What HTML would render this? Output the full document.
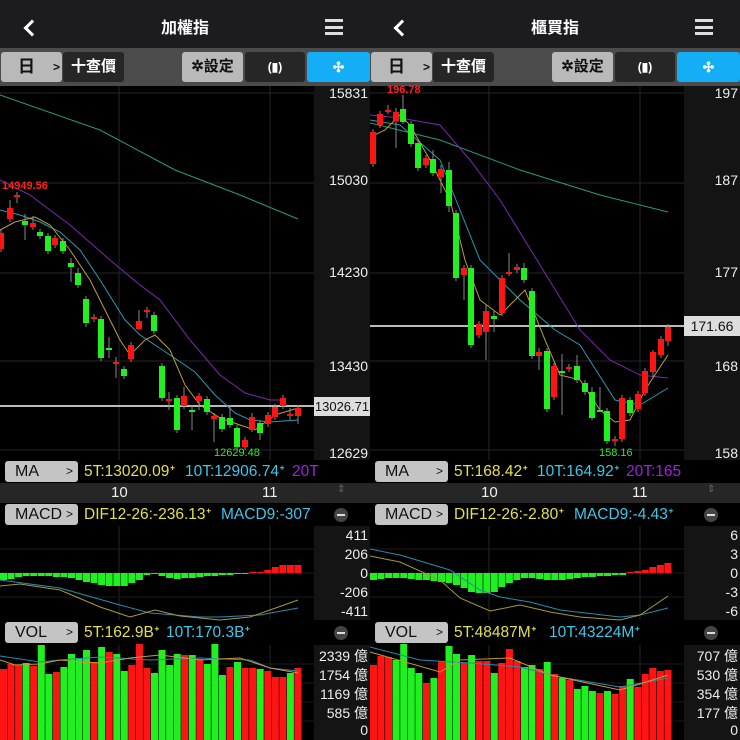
<!DOCTYPE html>
<html><head><meta charset="utf-8">
<style>
*{margin:0;padding:0;box-sizing:border-box}
body{width:740px;height:740px;background:#000;overflow:hidden;font-family:"Liberation Sans","Noto Sans CJK TC",sans-serif;position:relative}
.p{position:absolute;top:0;width:370px;height:740px;overflow:hidden}
.hdr{position:absolute;left:0;top:0;width:370px;height:48px;background:#1c1c1e;color:#fff;font-size:16px;font-weight:bold;text-align:center;line-height:58px}
.tb{position:absolute;left:0;top:48px;width:370px;height:38px;background:#4b4b4b}
.b{position:absolute;top:4px;height:30px;border-radius:3px;font-size:15px;font-weight:bold;text-align:center;line-height:30px}
.lg{background:#b9b9b9;color:#111}.dk{background:#262626;color:#fff}.bl{background:#13aef6;color:#fff}
.row{position:absolute;left:0;width:370px;height:23px;background:#000}
.btn{position:absolute;left:5px;top:1px;width:73px;height:21px;background:#c4c4c4;border-radius:3px;font-size:16px;color:#111;line-height:21px;padding-left:10px}
.btn span{position:absolute;right:5px;font-size:12px}
.t{position:absolute;top:1px;font-size:15.5px;white-space:nowrap;line-height:21px}
.ax{position:absolute;left:314px;width:56px;background:#141414}
.al{position:absolute;right:2px;font-size:14px;color:#eee;text-align:right;white-space:nowrap}
svg{position:absolute;left:0;top:0}
</style></head><body>

<div class="p" id="L" style="left:0">
 <div class="ax" style="top:86px;height:374px"></div>
 <div class="ax" style="top:526px;height:94px"></div>
 <div class="ax" style="top:645px;height:95px"></div>
 <svg id="sL" width="370" height="740"></svg>
 <div class="hdr">加權指</div>
 <div style="position:absolute;left:26px;top:22px;width:12px;height:12px;border-left:3px solid #fff;border-bottom:3px solid #fff;transform:rotate(45deg)"></div>
 <div style="position:absolute;left:325px;top:19px;width:18px;height:16px;border-top:3px solid #ddd;border-bottom:3px solid #ddd"><div style="margin-top:3.5px;height:3px;background:#ddd"></div></div>
 <div class="tb">
  <div class="b lg" style="left:1px;width:61px"><span style="position:absolute;left:17px;font-size:17px">日</span><span style="position:absolute;left:52px;font-size:12px">&gt;</span></div>
  <div class="b dk" style="left:63px;width:61px">十查價</div>
  <div class="b lg" style="left:182px;width:61px">✲設定</div>
  <div class="b dk" style="left:245px;width:60px;font-size:12px">(▮)</div>
  <div class="b bl" style="left:307px;width:63px;font-size:14px">✣</div>
 </div>
 <div class="al" style="top:85px">15831</div>
 <div class="al" style="top:172px">15030</div>
 <div class="al" style="top:264px">14230</div>
 <div class="al" style="top:358px">13430</div>
 <div class="al" style="top:445px">12629</div>
 <div style="position:absolute;left:314px;top:397px;width:56px;height:19px;background:#ddd;color:#111;font-size:13px;line-height:19px;text-align:center">13026.71</div>
 <div style="position:absolute;left:2px;top:180px;color:#ff2020;font-size:11px;font-weight:bold">14949.56</div>
 <div style="position:absolute;left:214px;top:447px;color:#2ee82e;font-size:11px">12629.48</div>
 <div class="row" style="top:460px"><div class="btn">MA<span>&gt;</span></div><div class="t" style="left:84px;color:#e4e04a">5T:13020.09ᐩ</div><div class="t" style="left:185px;color:#3cc8e8">10T:12906.74ᐩ</div><div class="t" style="left:292px;color:#a020e0">20T</div></div>
 <div style="position:absolute;left:0;top:483px;width:370px;height:20px;background:#262626;color:#eee;font-size:15px"><span style="position:absolute;left:111px;top:1px">10</span><span style="position:absolute;left:262px;top:1px">11</span><span style="position:absolute;left:337px;top:1px;color:#666;font-size:10px">⇕</span></div>
 <div class="row" style="top:503px"><div class="btn">MACD<span>&gt;</span></div><div class="t" style="left:84px;color:#e4e04a">DIF12-26:-236.13ᐩ</div><div class="t" style="left:221px;color:#3cc8e8">MACD9:-307</div><div style="position:absolute;left:334px;top:5px;width:14px;height:14px;border-radius:7px;background:#444"><div style="margin:6px 3px;height:2px;background:#ddd"></div></div></div>
 <div class="al" style="top:527px">411</div><div class="al" style="top:546px">206</div><div class="al" style="top:565px">0</div><div class="al" style="top:584px">-206</div><div class="al" style="top:603px">-411</div>
 <div class="row" style="top:621px"><div class="btn">VOL<span>&gt;</span></div><div class="t" style="left:84px;color:#e4e04a">5T:162.9Bᐩ</div><div class="t" style="left:166px;color:#3cc8e8">10T:170.3Bᐩ</div><div style="position:absolute;left:334px;top:5px;width:14px;height:14px;border-radius:7px;background:#444"><div style="margin:6px 3px;height:2px;background:#ddd"></div></div></div>
 <div class="al" style="top:646px">2339 億</div><div class="al" style="top:665px">1754 億</div><div class="al" style="top:684px">1169 億</div><div class="al" style="top:703px">585 億</div><div class="al" style="top:722px">0</div>
</div>

<div class="p" id="R" style="left:370px">
 <div class="ax" style="top:86px;height:374px"></div>
 <div class="ax" style="top:526px;height:94px"></div>
 <div class="ax" style="top:645px;height:95px"></div>
 <svg id="sR" width="370" height="740"></svg>
 <div class="hdr">櫃買指</div>
 <div style="position:absolute;left:26px;top:22px;width:12px;height:12px;border-left:3px solid #fff;border-bottom:3px solid #fff;transform:rotate(45deg)"></div>
 <div style="position:absolute;left:325px;top:19px;width:18px;height:16px;border-top:3px solid #ddd;border-bottom:3px solid #ddd"><div style="margin-top:3.5px;height:3px;background:#ddd"></div></div>
 <div class="tb">
  <div class="b lg" style="left:1px;width:61px"><span style="position:absolute;left:17px;font-size:17px">日</span><span style="position:absolute;left:52px;font-size:12px">&gt;</span></div>
  <div class="b dk" style="left:63px;width:61px">十查價</div>
  <div class="b lg" style="left:182px;width:61px">✲設定</div>
  <div class="b dk" style="left:245px;width:60px;font-size:12px">(▮)</div>
  <div class="b bl" style="left:307px;width:63px;font-size:14px">✣</div>
 </div>
 <div class="al" style="top:85px">197</div>
 <div class="al" style="top:172px">187</div>
 <div class="al" style="top:264px">177</div>
 <div class="al" style="top:358px">168</div>
 <div class="al" style="top:445px">158</div>
 <div style="position:absolute;left:314px;top:316px;width:56px;height:20px;background:#ddd;color:#111;font-size:14px;line-height:20px;text-align:center">171.66</div>
 <div style="position:absolute;left:17px;top:84px;color:#ff2020;font-size:11px;font-weight:bold">196.78</div>
 <div style="position:absolute;left:229px;top:447px;color:#2ee82e;font-size:11px">158.16</div>
 <div class="row" style="top:460px"><div class="btn">MA<span>&gt;</span></div><div class="t" style="left:84px;color:#e4e04a">5T:168.42ᐩ</div><div class="t" style="left:167px;color:#3cc8e8">10T:164.92ᐩ</div><div class="t" style="left:256px;color:#a020e0">20T:165</div></div>
 <div style="position:absolute;left:0;top:483px;width:370px;height:20px;background:#262626;color:#eee;font-size:15px"><span style="position:absolute;left:111px;top:1px">10</span><span style="position:absolute;left:262px;top:1px">11</span><span style="position:absolute;left:337px;top:1px;color:#666;font-size:10px">⇕</span></div>
 <div class="row" style="top:503px"><div class="btn">MACD<span>&gt;</span></div><div class="t" style="left:84px;color:#e4e04a">DIF12-26:-2.80ᐩ</div><div class="t" style="left:204px;color:#3cc8e8">MACD9:-4.43ᐩ</div><div style="position:absolute;left:334px;top:5px;width:14px;height:14px;border-radius:7px;background:#444"><div style="margin:6px 3px;height:2px;background:#ddd"></div></div></div>
 <div class="al" style="top:527px">6</div><div class="al" style="top:546px">3</div><div class="al" style="top:565px">0</div><div class="al" style="top:584px">-3</div><div class="al" style="top:603px">-6</div>
 <div class="row" style="top:621px"><div class="btn">VOL<span>&gt;</span></div><div class="t" style="left:84px;color:#e4e04a">5T:48487Mᐩ</div><div class="t" style="left:179px;color:#3cc8e8">10T:43224Mᐩ</div><div style="position:absolute;left:334px;top:5px;width:14px;height:14px;border-radius:7px;background:#444"><div style="margin:6px 3px;height:2px;background:#ddd"></div></div></div>
 <div class="al" style="top:646px">707 億</div><div class="al" style="top:665px">530 億</div><div class="al" style="top:684px">354 億</div><div class="al" style="top:703px">177 億</div><div class="al" style="top:722px">0</div>
</div>

<script>
var R='#ff1414',G='#20f020';
function draw(id,o){
 var s='';
 [93,183,273,361,450].forEach(function(y){s+='<line x1="0" x2="314" y1="'+y+'" y2="'+y+'" stroke="#262626"/>';});
 [119,270].forEach(function(x){s+='<line x1="'+x+'" x2="'+x+'" y1="86" y2="460" stroke="#262626"/><line x1="'+x+'" x2="'+x+'" y1="526" y2="620" stroke="#262626"/><line x1="'+x+'" x2="'+x+'" y1="645" y2="740" stroke="#262626"/>';});
 [549,573,597].forEach(function(y){s+='<line x1="0" x2="314" y1="'+y+'" y2="'+y+'" stroke="#1c1c1c"/>';});
 [664,683,702,721].forEach(function(y){s+='<line x1="0" x2="314" y1="'+y+'" y2="'+y+'" stroke="#1c1c1c"/>';});
 s+='<line x1="0" x2="314" y1="'+o.pl+'" y2="'+o.pl+'" stroke="#bbb" stroke-width="2"/>';
 function pl(pts,c){return '<polyline fill="none" stroke="'+c+'" stroke-width="1" points="'+pts+'"/>';}
 s+=pl(o.m60,'#2a9a7a')+pl(o.m20,'#7a2ab0')+pl(o.m10,'#2a9ab0')+pl(o.m5,'#b8a040');
 o.c.forEach(function(c,i){var x=c[0],col=c[1]?R:G,t=c[2],b=c[3],h=c[4]||t-3,l=c[5]||b+3;
  s+='<line x1="'+x+'" x2="'+x+'" y1="'+h+'" y2="'+l+'" stroke="#888"/>';
  s+='<rect x="'+(x-3)+'" y="'+t+'" width="6" height="'+Math.max(2,b-t)+'" fill="'+col+'"/>';});
 o.mh.forEach(function(v,i){var x=i*7.55;var top=Math.min(573,v),h=Math.abs(v-573)||1;s+='<rect x="'+x.toFixed(1)+'" y="'+top+'" width="7" height="'+h+'" fill="'+(v<573?R:G)+'"/>';});
 s+=pl(o.mt,'#2a8ab0')+pl(o.my,'#a89838');
 o.v.forEach(function(v,i){var x=i*7.55;s+='<rect x="'+x.toFixed(1)+'" y="'+v[0]+'" width="7" height="'+(740-v[0])+'" fill="'+(v[1]?R:G)+'"/>';});
 s+=pl(o.vt,'#2a8ab0')+pl(o.vy,'#c89838');
 document.getElementById(id).innerHTML=s;
}
draw('sL',{pl:406,
 c:[[1,1,233,249],[10,1,208,219,200,222],[17,1,195,196,192,203],[25,0,221,225,214,240],[33,1,223,227,216,230],[40,0,232,236],[48,0,236,251],[55,1,238,245],[63,0,241,251],[71,0,263,267,258,282],[78,0,273,285,268,288],[86,0,299,323,296,327],[94,1,317,319,314,322],[101,0,319,358],[109,0,348,350,337,358],[116,1,362,364,357,378],[124,0,369,376],[131,1,345,359],[139,1,321,329,310,330],[147,1,310,312,307,318],[154,0,315,331],[162,0,366,398],[169,1,399,401,392,410],[177,0,398,430],[184,1,396,406,387,409],[192,0,410,412,405,430],[199,1,396,401,393,410],[207,0,399,412],[214,1,416,419,413,442],[222,0,417,429],[230,0,418,425,405,428],[237,0,428,447],[245,1,440,447],[252,1,417,430,413,432],[260,0,423,433,420,440],[268,1,415,424],[275,1,407,417],[283,1,398,406],[290,1,414,416,408,420],[298,1,408,416,405,424]],
 m5:'0,230 15,222 35,217 50,225 70,250 90,280 105,310 120,340 130,355 145,340 155,335 170,350 185,385 200,405 220,418 240,425 255,430 275,415 298,408',
 m10:'0,210 20,215 40,222 60,232 80,250 100,280 125,320 140,335 170,355 195,372 215,395 235,413 250,420 270,422 298,420',
 m20:'0,180 30,195 70,225 110,260 140,285 160,300 190,340 220,375 245,393 270,400 285,400',
 m60:'0,95 100,130 175,170 240,195 298,219',
 mh:[580,579,577,576,576,576,576,577,577,578,580,582,583,585,586,586,586,583,580,575,574,576,578,579,578,578,577,576,576,575,575,574,574,572,572,570,567,565,565,565],
 mt:'0,580 60,588 120,605 150,613 200,617 220,617 260,615 298,608',
 my:'0,586 20,584 60,590 100,607 130,617 155,610 180,616 220,620 250,617 270,610 298,600',
 v:[[669,1],[664,1],[665,1],[663,0],[666,1],[645,0],[674,0],[672,1],[667,0],[654,0],[658,0],[650,0],[662,1],[647,0],[652,1],[654,0],[671,0],[665,1],[644,1],[668,1],[673,0],[650,0],[665,0],[654,0],[655,1],[655,0],[659,1],[664,0],[644,0],[675,0],[667,1],[662,0],[668,1],[668,1],[669,0],[671,1],[677,1],[677,1],[673,0],[668,1]],
 vt:'0,656 40,662 60,660 100,657 150,660 200,658 250,660 270,668 298,671',
 vy:'0,660 15,665 40,664 60,660 80,662 100,663 130,658 160,655 200,660 240,658 270,668 298,673'
});
draw('sR',{pl:326,
 c:[[3,1,132,164],[10,1,114,125],[18,1,110,111,105,114],[26,1,112,121,108,148],[33,0,109,122,95,124],[41,0,124,144],[48,0,143,168],[56,1,158,165],[63,0,159,173,150,176],[71,1,169,177,165,193],[79,0,170,206,162,212],[86,0,213,278],[94,1,268,275,265,300],[101,0,268,345],[109,1,324,335],[116,1,311,332,305,360],[124,0,316,319,310,332],[132,1,278,313],[139,1,272,274,253,276],[147,1,267,270],[154,0,268,280,263,283],[162,0,291,356],[169,1,352,356,348,370],[177,0,351,409,348,412],[184,1,366,397],[192,0,371,373,354,415],[199,1,367,369],[207,0,366,380,355,383],[215,0,383,392],[222,0,392,418,387,420],[230,0,410,412,387,412],[237,0,411,441],[245,1,439,441,436,446],[252,1,398,439],[260,0,400,413],[268,1,394,409],[275,1,371,393],[283,1,352,372,350,378],[291,1,339,355],[298,1,327,341,324,346]],
 m5:'0,137 15,130 30,115 40,125 60,160 80,200 95,260 110,300 130,315 145,300 155,290 175,340 190,375 210,380 230,410 245,422 260,420 275,390 298,355',
 m10:'0,120 30,125 70,160 90,210 110,260 150,300 185,330 210,345 245,400 270,405 298,388',
 m20:'0,115 30,118 70,125 100,160 130,200 170,265 210,330 240,360 270,375 298,378',
 m60:'0,123 70,140 150,170 230,195 298,212',
 mh:[580,579,578,578,578,579,580,580,581,582,583,585,588,592,593,593,592,587,583,580,578,578,579,580,580,580,579,578,577,577,576,576,575,575,572,571,570,567,565,563],
 mt:'0,549 30,555 80,570 110,590 130,597 160,602 190,610 250,617 270,615 298,608',
 my:'0,556 30,562 70,580 90,598 120,611 150,605 180,612 210,617 250,620 270,615 298,596',
 v:[[665,1],[656,1],[657,1],[660,0],[644,0],[668,0],[673,0],[683,1],[678,0],[661,1],[646,0],[654,0],[663,1],[655,0],[661,1],[661,1],[673,0],[663,1],[649,1],[661,1],[667,0],[665,0],[669,1],[662,0],[674,1],[678,0],[680,1],[689,0],[686,0],[691,0],[693,1],[691,0],[694,1],[686,1],[679,0],[687,1],[674,1],[668,1],[671,1],[670,1]],
 vt:'0,647 50,660 100,663 150,667 190,677 250,687 298,678',
 vy:'0,652 70,672 90,660 140,658 180,675 250,690 270,684 298,675'
});
</script>
</body></html>
